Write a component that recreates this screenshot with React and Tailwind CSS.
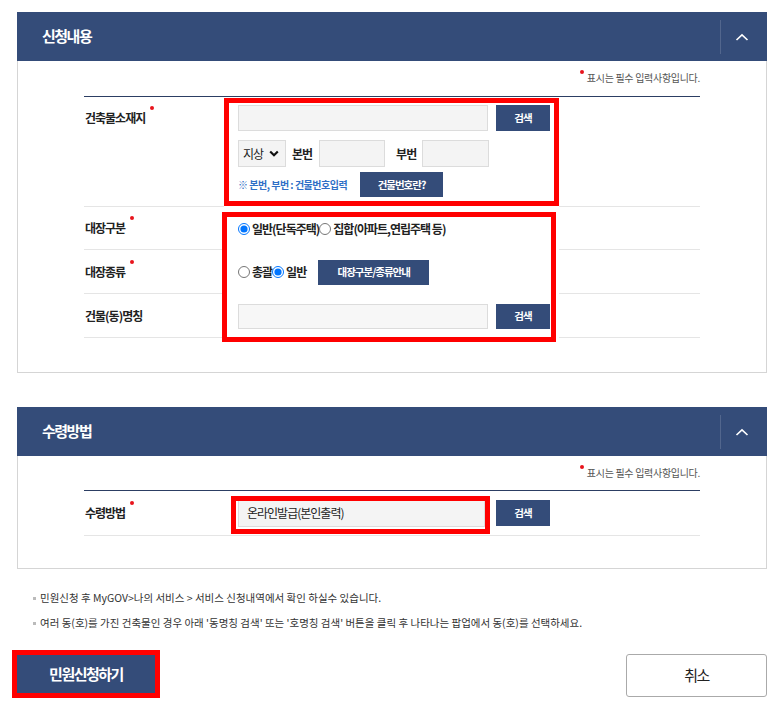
import React from "react";

const FONT = { fontFamily: '"Noto Sans CJK KR", "Noto Sans", sans-serif' };

const Chevron = () => (
  <svg width="14" height="8" viewBox="0 0 14 8" fill="none">
    <path d="M1.5 7L7 1.8L12.5 7" stroke="white" strokeWidth="1.6" />
  </svg>
);

const PanelHeader = ({ title }) => (
  <div className="flex h-[49px] items-center bg-[#344c79]">
    <h2 className="flex-1 pl-[25px] text-[15px] font-bold tracking-[-1.5px] text-white">
      {title}
    </h2>
    <div className="h-[34px] w-px bg-white/15" />
    <button className="flex h-full w-[46px] items-center justify-center pr-[4px]">
      <Chevron />
    </button>
  </div>
);

const RedDot = ({ className = "" }) => (
  <span className={`block h-[4px] w-[4px] shrink-0 rounded-full bg-[#e8141c] ${className}`} />
);

const RequiredNote = ({ h }) => (
  <div className={`flex ${h} justify-end border-b border-[#2c3e63] pt-[10px]`}>
    <p className="flex items-start text-[10px] leading-[14px] tracking-[-0.3px] text-[#555]">
      <RedDot className="mr-[3px] -mt-px" />
      표시는 필수 입력사항입니다.
    </p>
  </div>
);

const Label = ({ children, required }) => (
  <div className="flex items-start pl-px text-[12px] font-bold leading-[16px] tracking-[-1px] text-[#222]">
    <span>{children}</span>
    {required && <RedDot className="ml-[5px] -mt-[4px]" />}
  </div>
);

const NavyBtn = ({ children, className = "" }) => (
  <button
    className={`flex shrink-0 items-center justify-center bg-[#344c79] text-[10.5px] font-bold tracking-[-1px] text-white ${className}`}
  >
    {children}
  </button>
);

const Field = ({ className = "", value }) => (
  <div
    className={`flex shrink-0 items-center border border-[#dcdcdc] bg-[#f4f4f4] px-[8px] text-[12px] tracking-[-1px] text-[#222] ${className}`}
  >
    {value}
  </div>
);

const Radio = ({ name, checked, label }) => (
  <label className="flex items-center">
    <input
      type="radio"
      name={name}
      defaultChecked={checked}
      className="h-[12px] w-[12px] shrink-0"
    />
    <span className="ml-[2px] text-[12px] font-bold tracking-[-1px] text-[#222]">{label}</span>
  </label>
);

const Row = ({ h, label, required, lined, children }) => (
  <div className={`flex ${h}`}>
    <div className="flex w-[140px] shrink-0 items-center border-b border-[#e5e5e5]">
      <Label required={required}>{label}</Label>
    </div>
    <div
      className={`flex w-[335px] shrink-0 items-center pl-[14px] ${
        lined ? "border-b border-[#e5e5e5]" : ""
      }`}
    >
      {children}
    </div>
    <div className="flex-1 border-b border-[#e5e5e5]" />
  </div>
);

const RedBox = ({ className }) => (
  <div className={`pointer-events-none absolute border-[5px] border-[#ff0000] ${className}`} />
);

export default function App() {
  return (
    <div style={FONT} className="min-h-[717px] bg-white pt-[12px]">
      <div className="ml-[17px] w-[750px]">
        {/* 신청내용 */}
        <section>
          <PanelHeader title="신청내용" />
          <div className="border-x border-b border-[#d5d5d5] px-[66px] pb-[34px]">
            <RequiredNote h="h-[36px]" />

            <div className="relative">
              <div className="flex">
                <div className="w-[140px] shrink-0 border-b border-[#e5e5e5] pt-[13px]">
                  <Label required>건축물소재지</Label>
                </div>
                <div className="w-[335px] shrink-0 pb-[10px] pl-[14px] pt-[8px]">
                  <div className="flex items-center">
                    <Field className="h-[26px] w-[250px]" />
                    <NavyBtn className="ml-[8px] h-[26px] w-[54px]">검색</NavyBtn>
                  </div>
                  <div className="mt-[9px] flex items-center text-[12px] font-bold tracking-[-1px] text-[#222]">
                    <div className="flex h-[27px] w-[48px] items-center border border-[#dcdcdc] bg-[#f4f4f4] pl-[4px] font-normal">
                      지상
                      <svg className="ml-[6px]" width="10" height="7" viewBox="0 0 10 7" fill="none">
                        <path d="M1.2 1.5L5 5.2L8.8 1.5" stroke="#111" strokeWidth="2.2" />
                      </svg>
                    </div>
                    <span className="ml-[6px]">본번</span>
                    <Field className="ml-[7px] h-[27px] w-[66px]" />
                    <span className="ml-[11px]">부번</span>
                    <Field className="ml-[6px] h-[27px] w-[67px]" />
                  </div>
                  <div className="mt-[5px] flex items-center">
                    <span className="w-[122px] shrink-0 text-[10px] font-bold tracking-[-0.5px] text-[#2f6fc6]">
                      ※ 본번, 부번 : 건물번호입력
                    </span>
                    <NavyBtn className="h-[25px] w-[83px]">건물번호란?</NavyBtn>
                  </div>
                </div>
                <div className="flex-1 border-b border-[#e5e5e5]" />
              </div>
              <RedBox className="left-[140px] top-px h-[108px] w-[335px]" />
            </div>

            <div className="relative">
              <Row h="h-[43px]" label="대장구분" required>
                <Radio name="gubun" checked label="일반(단독주택)" />
                <Radio name="gubun" label="집합(아파트,연립주택 등)" />
              </Row>
              <Row h="h-[44px]" label="대장종류" required>
                <Radio name="kind" label="총괄" />
                <Radio name="kind" checked label="일반" />
                <NavyBtn className="ml-[12px] h-[25px] w-[111px]">대장구분/종류안내</NavyBtn>
              </Row>
              <Row h="h-[44px]" label="건물(동)명칭">
                <Field className="h-[25px] w-[250px] bg-[#f7f7f7]" />
                <NavyBtn className="ml-[8px] h-[25px] w-[54px]">검색</NavyBtn>
              </Row>
              <RedBox className="left-[138px] top-[5px] h-[130px] w-[334px]" />
            </div>
          </div>
        </section>

        {/* 수령방법 */}
        <section className="mt-[34px]">
          <PanelHeader title="수령방법" />
          <div className="border-x border-b border-[#d5d5d5] px-[66px] pb-[32px]">
            <RequiredNote h="h-[35px]" />
            <div className="relative">
              <Row h="h-[45px]" label="수령방법" required lined>
                <Field className="h-[27px] w-[247px]" value="온라인발급(본인출력)" />
                <NavyBtn className="ml-[11px] h-[26px] w-[54px]">검색</NavyBtn>
              </Row>
              <RedBox className="left-[147px] top-[5px] h-[38px] w-[259px]" />
            </div>
          </div>
        </section>

        <ul className="mt-[21px] flex flex-col gap-[9px] pl-[16px] text-[10.5px] leading-[16px] text-[#333]">
          <li className="flex items-center">
            <span className="mr-[4px] h-[3px] w-[3px] bg-[#bbb]" />
            민원신청 후 MyGOV&gt;나의 서비스 &gt; 서비스 신청내역에서 확인 하실수 있습니다.
          </li>
          <li className="flex items-center">
            <span className="mr-[4px] h-[3px] w-[3px] bg-[#bbb]" />
            여러 동(호)를 가진 건축물인 경우 아래 '동명칭 검색' 또는 '호명칭 검색' 버튼을 클릭 후 나타나는 팝업에서 동(호)를 선택하세요.
          </li>
        </ul>

        <div className="mt-[23px] flex items-start justify-between">
          <button className="mt-px h-[38px] w-[138px] bg-[#344c79] text-[15px] font-bold tracking-[-1.5px] text-white outline-[5px] outline-solid outline-[#ff0000]">
            민원신청하기
          </button>
          <button className="h-[43px] w-[141px] rounded-[3px] border border-[#aaa] bg-white text-[15px] tracking-[-1.5px] text-[#222]">
            취소
          </button>
        </div>
      </div>
    </div>
  );
}
